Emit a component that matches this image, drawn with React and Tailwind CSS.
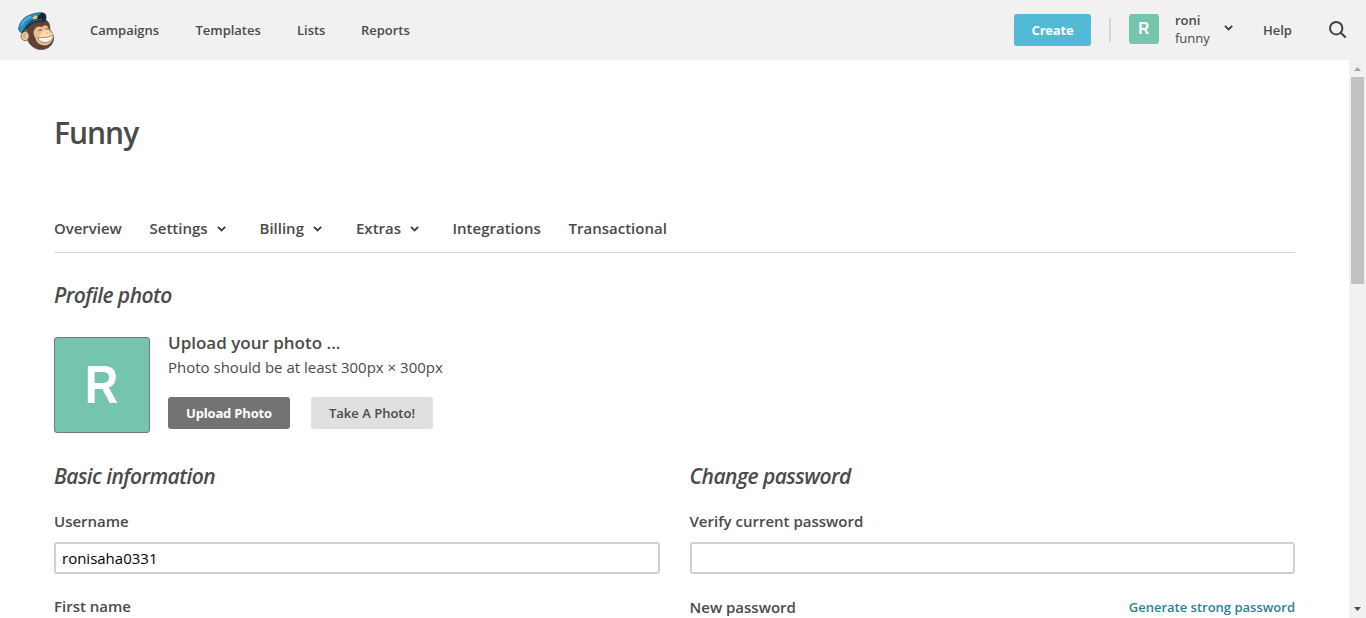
const font = "font-['Open_Sans','Noto_Sans',sans-serif]";

function Chevron({ className = "" }) {
  return (
    <svg className={className} width="10" height="8" viewBox="0 0 10 8" fill="none" stroke="#414141" strokeWidth="2">
      <path d="M1 1.9 4.6 5.4 8.2 1.9" />
    </svg>
  );
}

function Logo() {
  return (
    <svg width="38" height="40" viewBox="0 0 38 40">
      <path d="M10 14 C8 18 7 24 10 30 C13 36 19 39 24 38.5 C29 38.5 34 35 35.5 29 C36 25 35 22 32 19 C32 14 31 10 27 9 C20 8 14 10 10 14Z" fill="#5e4238" stroke="#4d3530" strokeWidth=".6" />
      <path d="M17 18 C18 15 22 15 24 16 C27 13 30 14 30.5 18 C33 20 35.5 23 35.5 25 C35 30 32 34 27 34.5 C21 34 18 31 17.5 27 C15 24 15 20 17 18Z" fill="#e9bd8d" />
      <path d="M24 21 C27 18 32 19 35 23.5 C32 26 26 27.5 20 26.5Z" fill="#f6d9ae" />
      <path d="M20 26.3 C25 27.5 31 26.5 35.3 24 C35 28.5 31.5 31.3 27 31.5 C23 31.5 21 29.5 20 26.3Z" fill="#fff" stroke="#8a6450" strokeWidth=".7" />
      <path d="M21 28.8 C26 29.8 31 28.8 35 26.7" fill="none" stroke="#d9cdc4" strokeWidth=".5" />
      <ellipse cx="7" cy="25" rx="4" ry="4.6" fill="#f0c999" stroke="#785143" strokeWidth=".8" />
      <path d="M8.5 22.8 C6 22.5 5 25 7 27.3" fill="none" stroke="#b98561" strokeWidth=".9" />
      <path d="M.8 17 C2 10 7 5.5 12 4 C16 2.3 20 1.8 24 1.8 L22 8 C15 8 9 12 4.5 22 C2 21 .5 20 .8 17Z" fill="#2690c4" stroke="#23455b" strokeWidth=".8" />
      <path d="M3.2 15 C5 9.5 9 6.8 13 5.5" fill="none" stroke="#4bb5e0" strokeWidth="2" />
      <path d="M4 21.5 C7 14 12 9.5 17 8 L21 4 L24 1.6 C27 1.7 28.8 4 28.3 7 C28.3 9 27.5 10.7 25.5 11 C18 10 11 13 7.5 19.5Z" fill="#192836" />
      <path d="M5.5 19 C9 12.5 15 9 24 8.8" fill="none" stroke="#2c7fa7" strokeWidth="1" />
      <path d="m14 6.8 2-1 .5-2 1.5 1.5 2-.5-1 2 .5 1.5-2-.5-1.5 1.5-.5-1.7z" fill="#e8cf68" />
      <path d="M20.5 19.5 24 18.7M27.5 17.8 29.5 18" stroke="#765040" strokeWidth="1" />
      <path d="M28.5 22 29.5 22.3M31.5 21.3 32.2 21.8" stroke="#94684d" strokeWidth=".8" />
    </svg>
  );
}

function Header() {
  return (
    <header className="flex h-[60px] shrink-0 items-center bg-[#f1f1f1] text-[13px] font-semibold">
      <div className="ml-[18px] mt-[2px] w-[72px]"><Logo /></div>
      <nav className="mt-[2px] flex flex-1 items-center tracking-[-0.03px]">
        <a className="w-[105.5px]">Campaigns</a>
        <a className="w-[101.5px]">Templates</a>
        <a className="w-[64px]">Lists</a>
        <a>Reports</a>
      </nav>
      <button className="h-8 w-[77px] rounded-[3px] bg-[#52bad5] pt-px font-bold tracking-[-0.2px] text-white">Create</button>
      <span className="ml-[18px] h-6 w-[2px] bg-[#d7d7d7]" />
      <span className="ml-[18px] flex h-[30px] w-[30px] items-center justify-center rounded-[3px] bg-[#74c4ae] -mt-[2px] font-['Liberation_Sans',sans-serif] text-[16px] font-bold text-white"><span className="scale-x-95">R</span></span>
      <div className="-mt-[2px] ml-4 w-[49px] leading-[18px]">
        <div>roni</div>
        <div className="font-normal">funny</div>
      </div>
      <Chevron className="-mt-[4px]" />
      <a className="ml-[29px] mt-[2px] w-[66px] tracking-[-0.03px]">Help</a>
      <svg className="mr-[19px]" width="18" height="18" viewBox="0 0 18 18" fill="none" stroke="#414141" strokeWidth="2">
        <circle cx="7.2" cy="7.2" r="6.2" />
        <path d="m11.7 11.7 5 4.8" strokeWidth="2.2" />
      </svg>
    </header>
  );
}

function Tabs() {
  return (
    <nav className="flex h-[49px] items-center border-b border-[#d8d8d8] text-[15px] font-semibold">
      <a className="w-[95.5px] tracking-[-0.04px]">Overview</a>
      <a className="flex w-[110px] items-center"><span className="w-[67px]">Settings</span><Chevron className="mt-px" /></a>
      <a className="flex w-[96.5px] items-center"><span className="w-[53.5px]">Billing</span><Chevron className="mt-px" /></a>
      <a className="flex w-[96.5px] items-center"><span className="w-[53.5px]">Extras</span><Chevron className="mt-px" /></a>
      <a className="w-[116px]">Integrations</a>
      <a>Transactional</a>
    </nav>
  );
}

function Scrollbar() {
  return (
    <div className="flex w-[17px] flex-col items-center bg-[#f1f1f1]">
      <svg width="17" height="17" viewBox="0 0 17 17" className="shrink-0"><path d="M5 11h7L8.5 7z" fill="#a3a3a3" /></svg>
      <div className="h-[207px] w-[13px] bg-[#c1c1c1]" />
      <svg width="17" height="17" viewBox="0 0 17 17" className="mt-auto shrink-0"><path d="M5 6h7l-3.5 4z" fill="#505050" /></svg>
    </div>
  );
}

function Heading({ children }) {
  return <h2 className="text-[21px] font-semibold italic leading-[30px] tracking-[-0.55px]">{children}</h2>;
}

export default function App() {
  return (
    <div className={`flex h-[618px] w-[1366px] flex-col overflow-hidden bg-white text-[#4a4a4a] ${font}`}>
      <Header />
      <div className="flex min-h-0 flex-1">
        <main className="w-[1349px] overflow-hidden pl-[54px] pr-[54px]">
          <h1 className="mt-[53px] text-[30px] font-semibold leading-[40px] tracking-[-1px]">Funny</h1>
          <div className="mt-[51px]"><Tabs /></div>
          <section className="mt-[27px]">
            <Heading>Profile photo</Heading>
            <div className="mt-[27px] flex">
              <div className="flex h-24 w-24 items-center justify-center rounded-[3px] border border-[#6d7c76] bg-[#74c4ae] pb-[2px] pr-[2px] font-['Liberation_Sans',sans-serif] text-[54px] font-bold text-white"><span className="scale-x-[.86]">R</span></div>
              <div className="-mt-[7px] ml-[18px]">
                <div className="text-[17px] font-semibold leading-[26px]">Upload your photo ...</div>
                <div className="-mt-px text-[15px] leading-[24px]">Photo should be at least 300px × 300px</div>
                <div className="mt-[18px] flex gap-[21px] text-[13px]">
                  <button className="h-8 w-[122px] rounded-[3px] bg-[#737373] pt-px font-bold tracking-[-0.18px] text-white">Upload Photo</button>
                  <button className="h-8 w-[122px] rounded-[3px] bg-[#e0e0e0] pt-px font-semibold">Take A Photo!</button>
                </div>
              </div>
            </div>
          </section>
          <section className="mt-[28px] grid grid-cols-2 gap-[30px] text-[15px] font-semibold leading-6">
            <div>
              <Heading>Basic information</Heading>
              <label className="mt-[18px] block">Username</label>
              <input defaultValue="ronisaha0331" className="mt-[9px] block h-8 w-full rounded-[3px] border-2 border-[#d0d0d0] px-[6px] font-normal text-black outline-none" />
              <label className="mt-[20px] block">First name</label>
            </div>
            <div>
              <Heading>Change password</Heading>
              <label className="mt-[18px] block">Verify current password</label>
              <input type="password" className="mt-[9px] block h-8 w-full rounded-[3px] border-2 border-[#d0d0d0] px-[6px] outline-none" />
              <div className="mt-[21px] flex justify-between">
                <label>New password</label>
                <a className="text-[13px] font-semibold text-[#2c7f92]">Generate strong password</a>
              </div>
            </div>
          </section>
        </main>
        <Scrollbar />
      </div>
    </div>
  );
}
